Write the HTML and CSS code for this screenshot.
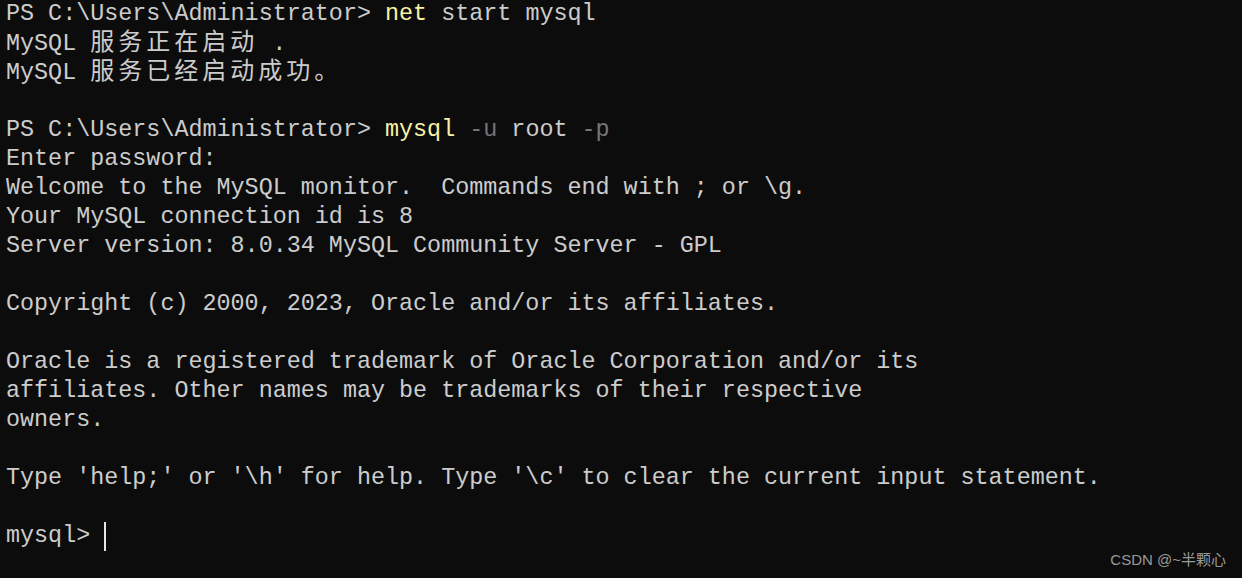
FILE: index.html
```html
<!DOCTYPE html>
<html lang="zh-CN">
<head>
<meta charset="utf-8">
<title>Terminal</title>
<link rel="stylesheet" href="styles.css">
</head>
<body>
<main class="term">
<div class="line">PS C:\Users\Administrator&gt; <span class="cmd">net</span> start mysql</div>
<div class="line">MySQL <span class="wide">服务正在启动</span> .</div>
<div class="line">MySQL <span class="wide">服务已经启动成功。</span></div>
<div class="line"> </div>
<div class="line">PS C:\Users\Administrator&gt; <span class="cmd">mysql</span> <span class="arg">-u</span> root <span class="arg">-p</span></div>
<div class="line">Enter password:</div>
<div class="line">Welcome to the MySQL monitor.  Commands end with ; or \g.</div>
<div class="line">Your MySQL connection id is 8</div>
<div class="line">Server version: 8.0.34 MySQL Community Server - GPL</div>
<div class="line"> </div>
<div class="line">Copyright (c) 2000, 2023, Oracle and/or its affiliates.</div>
<div class="line"> </div>
<div class="line">Oracle is a registered trademark of Oracle Corporation and/or its</div>
<div class="line">affiliates. Other names may be trademarks of their respective</div>
<div class="line">owners.</div>
<div class="line"> </div>
<div class="line">Type 'help;' or '\h' for help. Type '\c' to clear the current input statement.</div>
<div class="line"> </div>
<div class="line">mysql&gt; <span class="cursor"></span></div>
</main>
<div class="watermark">CSDN @~半颗心</div>
</body>
</html>
```
FILE: styles.css
```css
html, body {
  margin: 0;
  padding: 0;
  background: #0c0c0c;
  width: 1242px;
  height: 578px;
  overflow: hidden;
}
.term {
  padding: 0 0 0 6px;
  font-family: "Liberation Mono", "Noto Sans CJK SC", monospace;
  font-size: 23.4px;
  color: #cccccc;
}
.line {
  height: 29px;
  line-height: 29px;
  white-space: pre;
}
.wide {
  font-size: 24px;
  letter-spacing: 4px;
}
.cmd { color: #f9f1a5; }
.arg { color: #767676; }
.cursor {
  display: inline-block;
  width: 2px;
  height: 29px;
  background: #e6e6e6;
  vertical-align: top;
}
.watermark {
  position: absolute;
  right: 16px;
  bottom: 9px;
  font-family: "Liberation Sans", "Noto Sans CJK SC", sans-serif;
  font-size: 15px;
  color: #9a9a9a;
}
```
